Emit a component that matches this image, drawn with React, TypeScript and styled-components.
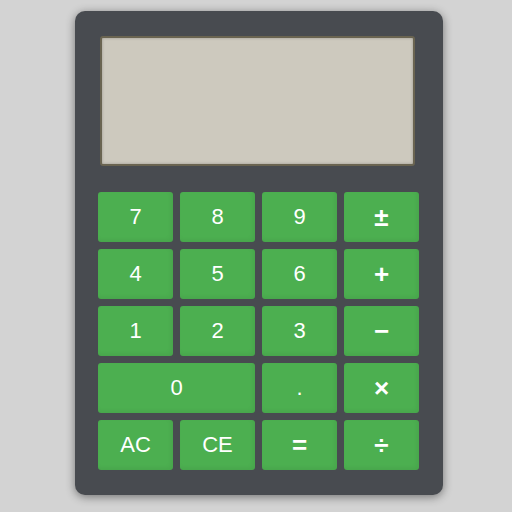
import React from "react";
import styled, { createGlobalStyle } from "styled-components";

const GlobalStyle = createGlobalStyle`
    html, body {
        margin: 0;
        padding: 0;
        background: #d3d3d3;
        font-family: "Liberation Sans", Arial, sans-serif;
    }
`;

const Page = styled.div`
    width: 512px;
    height: 512px;
    padding-top: 11px;
    padding-left: 75px;
    box-sizing: border-box;
`;

const Body = styled.div`
    width: 368px;
    height: 484px;
    box-sizing: border-box;
    padding: 25px 24px 25px 23px;
    background: #484b50;
    border-radius: 10px;
    box-shadow: 0 2px 10px rgba(0, 0, 0, 0.45);
    display: flex;
    flex-direction: column;
    gap: 26px;
`;

const Display = styled.div`
    width: 315px;
    height: 130px;
    margin-left: 2px;
    box-sizing: border-box;
    background: #cdc9be;
    border: 2px solid #6a6451;
    border-radius: 3px;
    box-shadow: inset 0 0 3px rgba(0, 0, 0, 0.25);
`;

const Keys = styled.div`
    display: grid;
    grid-template-columns: repeat(4, 75px);
    grid-auto-rows: 50px;
    column-gap: 7px;
    row-gap: 7px;
`;

const Key = styled.button<{ $span?: number }>`
    grid-column: span ${({ $span }) => $span ?? 1};
    border: none;
    border-radius: 3px;
    background: #4caf50;
    box-shadow: inset -2px -2px 4px rgba(0, 0, 0, 0.06);
    color: #ffffff;
    font-family: "Liberation Sans", Arial, sans-serif;
    font-size: 22px;
    padding: 0;
    cursor: pointer;
`;

const Op = styled(Key)`
    font-size: 26px;
    font-weight: bold;
`;

const App: React.FC = () => {
    return (
        <>
            <GlobalStyle />
            <Page>
                <Body>
                    <Display />
                    <Keys>
                        <Key>7</Key>
                        <Key>8</Key>
                        <Key>9</Key>
                        <Op>±</Op>
                        <Key>4</Key>
                        <Key>5</Key>
                        <Key>6</Key>
                        <Op>+</Op>
                        <Key>1</Key>
                        <Key>2</Key>
                        <Key>3</Key>
                        <Op>−</Op>
                        <Key $span={2}>0</Key>
                        <Key>.</Key>
                        <Op>×</Op>
                        <Key>AC</Key>
                        <Key>CE</Key>
                        <Op>=</Op>
                        <Op>÷</Op>
                    </Keys>
                </Body>
            </Page>
        </>
    );
};

export default App;
